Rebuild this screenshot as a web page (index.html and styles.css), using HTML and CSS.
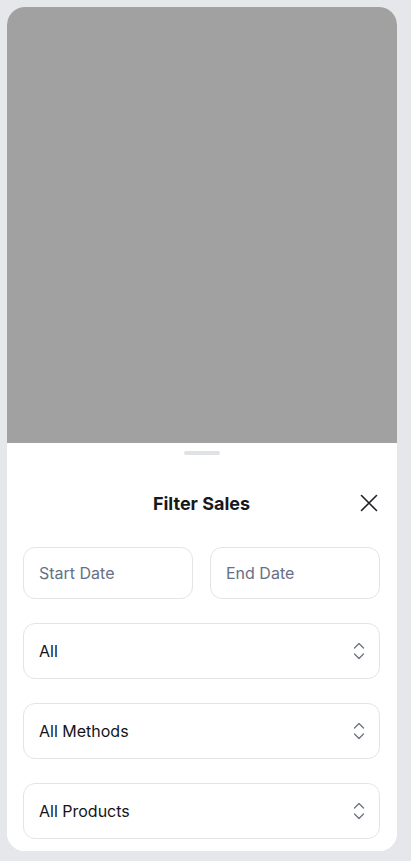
FILE: index.html
```html
<!DOCTYPE html>
<html lang="en">
<head>
<meta charset="utf-8">
<title>Filter Sales</title>
<link rel="stylesheet" href="styles.css">
</head>
<body>
<div class="device">
  <div class="backdrop"></div>
  <div class="sheet">
    <div class="handle"></div>
    <div class="header">
      <h2 class="title">Filter Sales</h2>
      <button class="close" aria-label="Close">
        <svg width="18" height="18" viewBox="0 0 18 18" fill="none" stroke="#1f2126" stroke-width="1.6" stroke-linecap="round"><path d="M1.5 1.5 L16.5 16.5 M16.5 1.5 L1.5 16.5"/></svg>
      </button>
    </div>
    <div class="dates">
      <div class="field date"><span class="placeholder">Start Date</span></div>
      <div class="field date"><span class="placeholder">End Date</span></div>
    </div>
    <div class="field select"><span class="value">All</span><svg class="chev" width="14" height="22" viewBox="0 0 14 22" fill="none" stroke="#6b7280" stroke-width="1.3" stroke-linecap="round" stroke-linejoin="round"><path d="M2.5 8 L7 3.5 L11.5 8"/><path d="M2.5 14 L7 18.5 L11.5 14"/></svg></div>
    <div class="field select"><span class="value">All Methods</span><svg class="chev" width="14" height="22" viewBox="0 0 14 22" fill="none" stroke="#6b7280" stroke-width="1.3" stroke-linecap="round" stroke-linejoin="round"><path d="M2.5 8 L7 3.5 L11.5 8"/><path d="M2.5 14 L7 18.5 L11.5 14"/></svg></div>
    <div class="field select"><span class="value">All Products</span><svg class="chev" width="14" height="22" viewBox="0 0 14 22" fill="none" stroke="#6b7280" stroke-width="1.3" stroke-linecap="round" stroke-linejoin="round"><path d="M2.5 8 L7 3.5 L11.5 8"/><path d="M2.5 14 L7 18.5 L11.5 14"/></svg></div>
  </div>
</div>
</body>
</html>
```
FILE: styles.css
```css
* { box-sizing: border-box; }
html, body { margin: 0; padding: 0; }
body {
  background: #e5e7eb;
  padding: 7px;
  font-family: "Inter", "Noto Sans", sans-serif;
}
.device {
  width: 390px;
  height: 844px;
  border-radius: 18px;
  overflow: hidden;
  display: flex;
  flex-direction: column;
  background: #ffffff;
}
.backdrop {
  height: 436px;
  background: #a1a1a1;
  flex: none;
}
.sheet {
  flex: 1;
  background: #ffffff;
  padding: 8px 17px 12px 16px;
  display: flex;
  flex-direction: column;
}
.handle {
  width: 36px;
  height: 4px;
  border-radius: 2px;
  background: #dfe2e7;
  margin: 0 auto;
}
.header {
  height: 40px;
  margin-top: 28px;
  display: flex;
  align-items: center;
  justify-content: center;
  position: relative;
}
.title {
  margin: 0;
  font-size: 18px;
  font-weight: 700;
  color: #18191c;
}
.close {
  position: absolute;
  right: 2px;
  top: 11px;
  width: 18px;
  height: 18px;
  padding: 0;
  border: 0;
  background: none;
  display: flex;
}
.dates {
  margin-top: 24px;
  display: grid;
  grid-template-columns: 1fr 1fr;
  gap: 17px;
}
.field {
  border: 1px solid #e2e4e8;
  border-radius: 12px;
  display: flex;
  align-items: center;
  padding: 0 15px;
  font-size: 16px;
}
.date { height: 52px; }
.placeholder { color: #667085; }
.select {
  height: 56px;
  margin-top: 24px;
  justify-content: space-between;
  padding-right: 13px;
}
.value { color: #141518; }
.chev { flex: none; }
```
